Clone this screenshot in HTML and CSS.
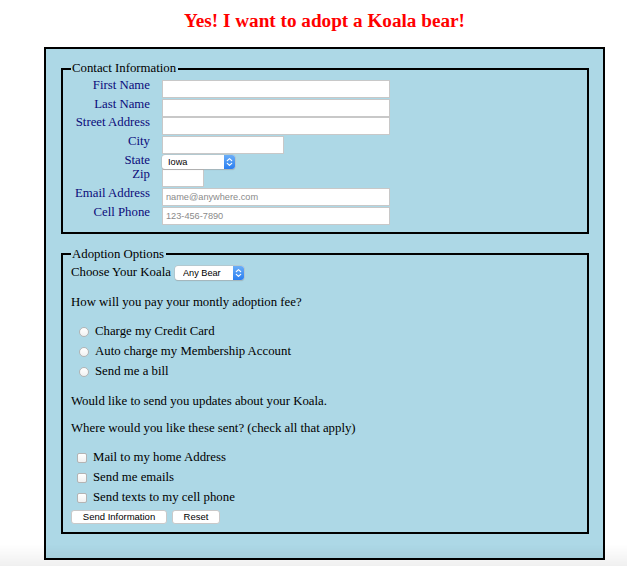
FILE: index.html
```html
<!DOCTYPE html>
<html lang="en">
<head>
<meta charset="utf-8">
<title>Adopt a Koala</title>
<link rel="stylesheet" href="styles.css">
</head>
<body>
<div class="page">
  <h1 class="title">Yes! I want to adopt a Koala bear!</h1>
  <form class="box">
    <fieldset class="set contact">
      <legend class="legend">Contact Information</legend>
      <div class="contact-grid">
        <label class="lbl" for="fn">First Name</label>
        <input class="field field-long" id="fn" type="text">
        <label class="lbl" for="ln">Last Name</label>
        <input class="field field-long" id="ln" type="text">
        <label class="lbl" for="st">Street Address</label>
        <input class="field field-long" id="st" type="text">
        <label class="lbl" for="ct">City</label>
        <input class="field field-city" id="ct" type="text">
        <label class="lbl" for="sa">State</label>
        <span class="select select-state">
          <select class="select-native" id="sa"><option>Iowa</option></select>
          <span class="select-arrow"><svg width="11" height="14" viewBox="0 0 11 14"><path d="M3.3 5.6 L5.5 3.6 L7.7 5.6 M3.3 8.4 L5.5 10.4 L7.7 8.4" fill="none" stroke="#fff" stroke-width="1.2" stroke-linecap="round" stroke-linejoin="round"/></svg></span>
        </span>
        <label class="lbl" for="zp">Zip</label>
        <input class="field field-zip" id="zp" type="text">
        <label class="lbl" for="em">Email Address</label>
        <input class="field field-long" id="em" type="email" placeholder="name@anywhere.com">
        <label class="lbl" for="cp">Cell Phone</label>
        <input class="field field-long" id="cp" type="tel" placeholder="123-456-7890">
      </div>
    </fieldset>

    <fieldset class="set options">
      <legend class="legend">Adoption Options</legend>
      <div class="koala-row">
        <label for="kb">Choose Your Koala</label>
        <span class="select select-koala">
          <select class="select-native" id="kb"><option>Any Bear</option></select>
          <span class="select-arrow"><svg width="11" height="14" viewBox="0 0 11 14"><path d="M3.3 5.6 L5.5 3.6 L7.7 5.6 M3.3 8.4 L5.5 10.4 L7.7 8.4" fill="none" stroke="#fff" stroke-width="1.2" stroke-linecap="round" stroke-linejoin="round"/></svg></span>
        </span>
      </div>
      <p class="line line-pay">How will you pay your montly adoption fee?</p>
      <div class="choices choices-radio">
        <label class="choice"><input class="radio" type="radio" name="pay">Charge my Credit Card</label>
        <label class="choice"><input class="radio" type="radio" name="pay">Auto charge my Membership Account</label>
        <label class="choice"><input class="radio" type="radio" name="pay">Send me a bill</label>
      </div>
      <p class="line line-updates">Would like to send you updates about your Koala.</p>
      <p class="line line-where">Where would you like these sent? (check all that apply)</p>
      <div class="choices choices-check">
        <label class="choice"><input class="check" type="checkbox">Mail to my home Address</label>
        <label class="choice"><input class="check" type="checkbox">Send me emails</label>
        <label class="choice"><input class="check" type="checkbox">Send texts to my cell phone</label>
      </div>
      <div class="buttons">
        <button class="btn btn-send" type="submit">Send Information</button>
        <button class="btn btn-reset" type="reset">Reset</button>
      </div>
    </fieldset>
  </form>
</div>
<div class="shade"></div>
</body>
</html>
```

FILE: styles.css
```css
html, body {
  margin: 0;
  padding: 0;
  background: #ffffff;
}

body {
  font-family: "Liberation Serif", "Times New Roman", serif;
  font-size: 12.8px;
  line-height: 15px;
  color: #000;
}

.page {
  width: 561px;
  margin-left: 44px;
}

.title {
  margin: 9px 0 14px;
  text-align: center;
  color: #ff0000;
  font-size: 19.2px;
  line-height: 24px;
  font-weight: bold;
}

.box {
  border: 2px solid #000;
  background: #add8e6;
  padding: 12px 14px 24px 15px;
}

.set {
  margin: 0;
  min-width: 0;
  border: 2px solid #000;
}

.legend {
  padding: 0 2px 0 1px;
  line-height: 15px;
}

.contact {
  padding: 4px 8px 7px 8px;
}

.contact-grid {
  display: grid;
  grid-template-columns: 79px max-content;
  column-gap: 12px;
  row-gap: 0.7px;
  align-items: start;
}

.lbl {
  text-align: right;
  color: #0b0b7a;
  line-height: 11px;
}

.field {
  box-sizing: border-box;
  height: 18px;
  margin: 0;
  padding: 0 3px;
  border: 1px solid #c8c8c8;
  background: #fff;
  font-family: "Liberation Sans", Arial, sans-serif;
  font-size: 9.2px;
  color: #000;
  outline: none;
}

.field::placeholder {
  color: #8a8a8a;
}

.field-long { width: 228px; }
.field-city { width: 122px; }
.field-zip  { width: 42px; }

.select {
  position: relative;
  display: inline-block;
  height: 14px;
}

.select-state { width: 73px; }
.select-koala { width: 69px; }

.select-native {
  appearance: none;
  -webkit-appearance: none;
  box-sizing: border-box;
  display: block;
  width: 100%;
  height: 14px;
  margin: 0;
  padding: 0 0 0 6px;
  border: none;
  border-radius: 3px;
  background: #fff;
  box-shadow: 0 0 0 0.5px #b9b9b9, 0 1px 1px rgba(0, 0, 0, 0.18);
  font-family: "Liberation Sans", Arial, sans-serif;
  font-size: 9.2px;
  line-height: 14px;
  color: #000;
  outline: none;
}

.select-koala .select-native {
  padding-left: 8px;
}

.select-arrow {
  position: absolute;
  top: 0;
  right: 0;
  width: 11px;
  height: 14px;
  border-radius: 0 3px 3px 0;
  background: linear-gradient(#6aaef8, #2a7ef0);
  display: flex;
}

.options {
  margin-top: 13px;
  padding: 3px 8px 8px 8px;
}

.koala-row {
  display: flex;
  align-items: center;
  gap: 4px;
  height: 16px;
}

.line {
  margin: 0;
}

.line-pay { margin-top: 14px; }
.line-updates { margin-top: 12.5px; }
.line-where { margin-top: 12px; }

.choices {
  margin-top: 11.8px;
}

.choices-check {
  margin-top: 11.5px;
}

.choice {
  display: flex;
  align-items: center;
  height: 20px;
  gap: 6px;
}

.choices-radio .choice { padding-left: 8px; }
.choices-check .choice { padding-left: 6px; }

.radio, .check {
  appearance: none;
  -webkit-appearance: none;
  box-sizing: border-box;
  width: 10px;
  height: 10px;
  margin: 0;
  border: 1px solid #b4b4b4;
  background: linear-gradient(#ffffff, #f1f1f1);
}

.radio { border-radius: 50%; }
.check { border-radius: 2px; }

.buttons {
  display: flex;
  gap: 5px;
  margin-top: 2px;
}

.btn {
  box-sizing: border-box;
  height: 14px;
  margin: 0;
  padding: 0;
  border: 1px solid #c9c9c9;
  border-radius: 3px;
  background: #fff;
  font-family: "Liberation Sans", Arial, sans-serif;
  font-size: 9.5px;
  line-height: 12px;
  color: #000;
}

.btn-send { width: 96px; }
.btn-reset { width: 48px; }

.shade {
  position: fixed;
  left: 0;
  right: 0;
  bottom: 0;
  height: 22px;
  background: linear-gradient(rgba(0, 0, 0, 0), rgba(0, 0, 0, 0.06));
  pointer-events: none;
}
```
